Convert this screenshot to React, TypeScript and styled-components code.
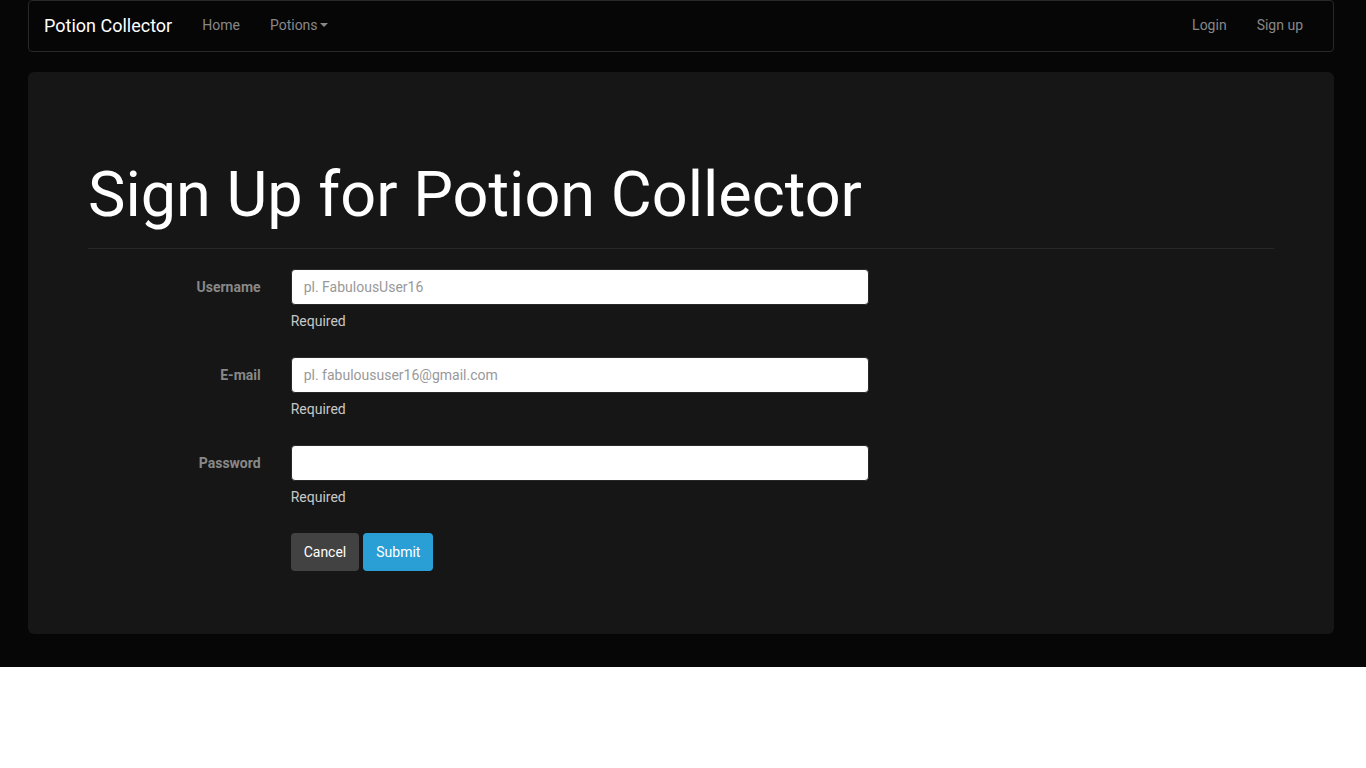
import React from "react";
import styled, { createGlobalStyle } from "styled-components";

const Global = createGlobalStyle`
  html, body { margin: 0; padding: 0; background: #fff; }
  body { font-family: Roboto, "Helvetica Neue", Arial, sans-serif; font-size: 14px; line-height: 1.42857; color: #888; }
  * { box-sizing: border-box; }
`;

const Page = styled.div`
  background: #060606;
  padding: 0 32px 33px 28px;
`;

const Navbar = styled.nav`
  height: 52px;
  border: 1px solid #282828;
  border-radius: 4px;
  background: #060606;
  display: flex;
  align-items: center;
  padding: 0 15px 2px 15px;
  margin-bottom: 20px;
`;

const Brand = styled.a`
  color: #fff;
  font-size: 18px;
  line-height: 20px;
  padding-right: 15px;
  margin-top: 2px;
  text-decoration: none;
`;

const NavList = styled.ul<{ $right?: boolean }>`
  list-style: none;
  margin: 0;
  padding: 0;
  display: flex;
  margin-left: ${(p) => (p.$right ? "auto" : "0")};
`;

const NavLink = styled.a`
  display: flex;
  align-items: center;
  color: #888;
  padding: 15px;
  line-height: 20px;
  text-decoration: none;
  font-size: 14px;
`;

const Caret = styled.span`
  display: inline-block;
  width: 0;
  height: 0;
  margin-left: 2px;
  border-top: 4px solid #888;
  border-left: 4px solid transparent;
  border-right: 4px solid transparent;
`;

const Jumbotron = styled.div`
  background: #161616;
  border-radius: 6px;
  padding: 48px 60px;
`;

const Title = styled.h1`
  margin: 0;
  padding: 40px 0 19px;
  font-size: 63px;
  font-weight: 400;
  line-height: 1.1;
  color: #fff;
  border-bottom: 1px solid #282828;
  margin-bottom: 20px;
`;

const Form = styled.form`
  display: flex;
  flex-direction: column;
  margin: 0 -15px;
`;

const Group = styled.div<{ $last?: boolean }>`
  display: grid;
  grid-template-columns: 16.6667% 50%;
  margin-bottom: ${(p) => (p.$last ? "15px" : "26px")};
`;

const Label = styled.label`
  text-align: right;
  padding: 8px 15px 0;
  font-weight: 700;
  color: #888;
  font-size: 14px;
  line-height: 20px;
`;

const Field = styled.div`
  padding: 0 15px;
  display: flex;
  flex-direction: column;
`;

const Input = styled.input`
  height: 36px;
  width: 100%;
  border: 1px solid #282828;
  border-radius: 4px;
  background: #fff;
  padding: 8px 12px;
  font-family: Roboto, Arial, sans-serif;
  font-size: 14px;
  color: #555;
  outline: none;
  &::placeholder { color: #999; }
`;

const Help = styled.span`
  margin-top: 6px;
  color: #c8c8c8;
  line-height: 20px;
`;

const Buttons = styled.div`
  display: flex;
  gap: 4px;
`;

const Button = styled.button<{ $primary?: boolean }>`
  height: 38px;
  padding: 0 13px;
  border: none;
  border-radius: 4px;
  color: #fff;
  font-family: Roboto, Arial, sans-serif;
  font-size: 14px;
  background: ${(p) => (p.$primary ? "#2a9fd6" : "#424242")};
  cursor: pointer;
`;

export default function App() {
  return (
    <>
      <Global />
      <Page>
        <Navbar>
          <Brand href="#">Potion Collector</Brand>
          <NavList>
            <li><NavLink href="#">Home</NavLink></li>
            <li><NavLink href="#">Potions<Caret /></NavLink></li>
          </NavList>
          <NavList $right>
            <li><NavLink href="#">Login</NavLink></li>
            <li><NavLink href="#">Sign up</NavLink></li>
          </NavList>
        </Navbar>
        <Jumbotron>
          <Title>Sign Up for Potion Collector</Title>
          <Form>
            <Group>
              <Label>Username</Label>
              <Field>
                <Input placeholder="pl. FabulousUser16" />
                <Help>Required</Help>
              </Field>
            </Group>
            <Group>
              <Label>E-mail</Label>
              <Field>
                <Input placeholder="pl. fabuloususer16@gmail.com" />
                <Help>Required</Help>
              </Field>
            </Group>
            <Group>
              <Label>Password</Label>
              <Field>
                <Input type="password" />
                <Help>Required</Help>
              </Field>
            </Group>
            <Group $last>
              <div />
              <Field>
                <Buttons>
                  <Button type="button">Cancel</Button>
                  <Button type="button" $primary>Submit</Button>
                </Buttons>
              </Field>
            </Group>
          </Form>
        </Jumbotron>
      </Page>
    </>
  );
}
